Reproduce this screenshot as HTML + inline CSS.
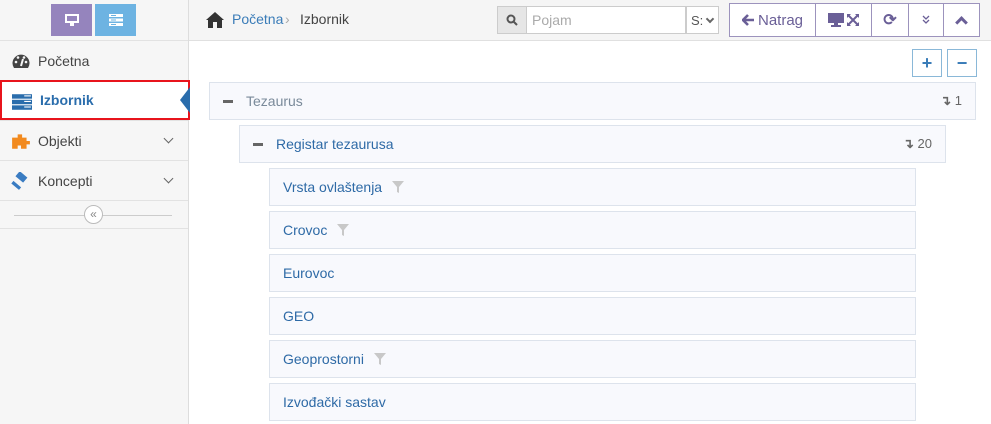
<!DOCTYPE html>
<html><head><meta charset="utf-8"><style>
*{box-sizing:border-box;margin:0;padding:0}
body{width:991px;height:424px;overflow:hidden;background:#fff;font-family:"Liberation Sans",sans-serif;font-size:13px;position:relative}
.abs{position:absolute}
#side{left:0;top:0;width:189px;height:424px;background:#f6f6f6;border-right:1px solid #ddd}
.topb{top:4px;width:41px;height:32px;display:flex;align-items:center;justify-content:center}
.item{left:0;width:188px;height:40px;border-top:1px solid #e2e2e2;display:flex;align-items:center;padding-left:38px;color:#444;font-size:14px}
.ico{position:absolute;left:11px;top:11px;width:20px;height:18px}
.chev{position:absolute;right:16px;top:14px;width:7px;height:7px;border-right:1.5px solid #666;border-bottom:1.5px solid #666;transform:rotate(45deg)}
#hdr{left:189px;top:0;width:802px;height:41px;background:#f5f5f5;border-bottom:1px solid #e0e0e0}
.btn{top:3px;height:34px;border:1px solid #9c93bd;background:#fff;display:flex;align-items:center;justify-content:center;color:#6a5f97}
.row{height:38px;background:#f8f9fd;border:1px solid #dde3ec;display:flex;align-items:center;color:#2e6aa6;font-size:14px}
.minus{display:inline-block;width:10px;height:3px;background:#666;margin:0 13px 0 13px}
.filt{display:inline-block;margin-left:10px;width:12px;height:12px}
.cnt{margin-left:auto;margin-right:13px;color:#666;font-size:13px}
.sb{top:49px;width:30px;height:28px;border:1px solid #8ab8d8;background:#fff;color:#3a7cb8;font-size:18px;font-weight:bold;display:flex;align-items:center;justify-content:center}
</style></head><body>
<div id="side" class="abs">
 <div class="abs topb" style="left:51px;background:#9584bd"><svg width="14" height="12" viewBox="0 0 14 12"><rect x="0" y="0" width="14" height="9" fill="#fff"/><rect x="2" y="2" width="10" height="5" fill="#9584bd"/><rect x="5" y="9" width="4" height="3" fill="#fff"/></svg></div>
 <div class="abs topb" style="left:95px;background:#6db3e2"><svg width="14" height="12" viewBox="0 0 14 12"><rect y="0" width="14" height="3" fill="#fff"/><rect y="4.5" width="14" height="3" fill="#fff"/><rect y="9" width="14" height="3" fill="#fff"/><rect x="2" y="1" width="5" height="1" fill="#6db3e2"/><rect x="2" y="5.5" width="5" height="1" fill="#6db3e2"/><rect x="2" y="10" width="5" height="1" fill="#6db3e2"/></svg></div>
 <div class="abs item" style="top:40px"><svg class="ico" viewBox="0 0 20 18"><path d="M3 16A8.5 8.5 0 1 1 17 16Z" fill="#444"/><path d="M10 14L12 7" stroke="#f6f6f6" stroke-width="2"/><circle cx="5" cy="10" r="1.3" fill="#f6f6f6"/><circle cx="15" cy="10" r="1.3" fill="#f6f6f6"/><circle cx="7" cy="5.5" r="1.3" fill="#f6f6f6"/><circle cx="13" cy="5.5" r="1.3" fill="#f6f6f6"/></svg>Početna</div>
 <div class="abs item" style="top:80px;background:#fff;border:2px solid #e8141c;width:190px;color:#2a6dac;font-weight:bold;font-size:14px"><svg class="ico" viewBox="0 0 18 16" style="left:10px"><rect y="1" width="18" height="4" fill="#2a6dac"/><rect y="6" width="18" height="4" fill="#2a6dac"/><rect y="11" width="18" height="4" fill="#2a6dac"/><rect x="11" y="2" width="6" height="1" fill="#fff"/><rect x="11" y="7" width="6" height="1" fill="#fff"/><rect x="11" y="12" width="6" height="1" fill="#fff"/></svg>Izbornik
  <div style="position:absolute;right:-2px;top:5px;width:0;height:0;border-top:13px solid transparent;border-bottom:13px solid transparent;border-right:10px solid #2a6dac"></div></div>
 <div class="abs item" style="top:120px"><svg class="ico" viewBox="0 0 18 16"><path d="M1 5H6V2H10V5H14V8H17V11H14V15H9V12H6V15H1Z" fill="#f28a1e"/></svg>Objekti<div class="chev"></div></div>
 <div class="abs item" style="top:160px"><svg class="ico" viewBox="0 0 18 16"><rect x="5" y="1" width="9" height="6" transform="rotate(40 9 4)" fill="#3a7cc2"/><rect x="3" y="8" width="3" height="9" transform="rotate(-50 4 12)" fill="#3a7cc2"/></svg>Koncepti<div class="chev"></div></div>
 <div class="abs" style="left:0;top:200px;width:188px;height:29px;border-top:1px solid #e2e2e2;border-bottom:1px solid #e2e2e2">
  <div class="abs" style="left:14px;top:14px;width:158px;height:1px;background:#ccc"></div>
  <div class="abs" style="left:84px;top:4px;width:19px;height:19px;border:1px solid #bbb;border-radius:50%;background:#fff;font-size:12px;color:#888;text-align:center;line-height:16px">«</div>
 </div>
</div>
<div id="hdr" class="abs">
 <svg class="abs" style="left:16px;top:11px" width="20" height="17" viewBox="0 0 20 17"><path d="M10 1L1 9H3V17H8V11H12V17H17V9H19Z" fill="#333"/></svg>
 <span class="abs" style="left:43px;top:11px;color:#3a7cb8;font-size:14px">Početna</span>
 <span class="abs" style="left:96px;top:11px;color:#aaa;font-size:14px">›</span>
 <span class="abs" style="left:111px;top:11px;color:#444;font-size:14px">Izbornik</span>
 <div class="abs" style="left:308px;top:6px;width:30px;height:28px;background:#e6e6e6;border:1px solid #ccc;display:flex;align-items:center;justify-content:center"><svg width="12" height="12" viewBox="0 0 12 12"><circle cx="5" cy="5" r="3.5" stroke="#555" stroke-width="2" fill="none"/><path d="M7.5 7.5L11 11" stroke="#555" stroke-width="2"/></svg></div>
 <div class="abs" style="left:337px;top:6px;width:160px;height:28px;background:#fff;border:1px solid #ccc;color:#aaa;font-size:14px;padding:5px 5px">Pojam</div>
 <div class="abs" style="left:497px;top:6px;width:33px;height:28px;background:#fff;border:1px solid #ccc;color:#555;font-size:13px;padding:6px 4px">S:<span style="display:inline-block;width:6px;height:6px;border-right:2px solid #666;border-bottom:2px solid #666;transform:rotate(45deg);margin-left:4px;position:relative;top:-3px"></span></div>
 <div class="abs btn" style="left:540px;width:87px;font-size:15px"><svg width="12" height="12" viewBox="0 0 12 12" style="margin-right:4px"><path d="M6 1L1 6L6 11M1 6H12" stroke="#6a5f97" stroke-width="2.6" fill="none"/></svg>Natrag</div>
 <div class="abs btn" style="left:626px;width:57px"><svg width="32" height="14" viewBox="0 0 32 14"><rect x="0" y="0" width="16" height="10" fill="#6a5f97"/><rect x="6" y="10" width="4" height="2" fill="#6a5f97"/><rect x="3" y="12" width="10" height="2" fill="#6a5f97"/><path d="M19 1H23L19 5ZM31 1V5L27 1ZM19 13V9L23 13ZM31 13H27L31 9Z" fill="#6a5f97"/><path d="M20 2L30 12M30 2L20 12" stroke="#6a5f97" stroke-width="2"/></svg></div>
 <div class="abs btn" style="left:682px;width:38px;font-size:16px;font-weight:bold">⟳</div>
 <div class="abs btn" style="left:719px;width:36px"><svg width="10" height="10" viewBox="0 0 10 10"><path d="M2 1L5 4L8 1M2 5L5 8L8 5" stroke="#6a5f97" stroke-width="1.3" fill="none"/></svg></div>
 <div class="abs btn" style="left:754px;width:37px"><div style="width:9px;height:9px;border-left:3px solid #6a5f97;border-top:3px solid #6a5f97;transform:rotate(45deg);margin-top:5px"></div></div>
</div>
<div class="abs sb" style="left:912px">+</div>
<div class="abs sb" style="left:947px">−</div>
<div class="abs row" style="left:209px;top:82px;width:767px;color:#7a8a9a"><span class="minus"></span>Tezaurus<span class="cnt"><b>↴</b> 1</span></div>
<div class="abs row" style="left:239px;top:125px;width:707px"><span class="minus"></span>Registar tezaurusa<span class="cnt"><b>↴</b> 20</span></div>
<div class="abs row" style="left:269px;top:168px;width:647px;padding-left:13px">Vrsta ovlaštenja<svg class="filt" viewBox="0 0 12 12"><path d="M0 0H12L7 6V12L5 11V6Z" fill="#c8c8c8"/></svg></div>
<div class="abs row" style="left:269px;top:211px;width:647px;padding-left:13px">Crovoc<svg class="filt" viewBox="0 0 12 12"><path d="M0 0H12L7 6V12L5 11V6Z" fill="#c8c8c8"/></svg></div>
<div class="abs row" style="left:269px;top:254px;width:647px;padding-left:13px">Eurovoc</div>
<div class="abs row" style="left:269px;top:297px;width:647px;padding-left:13px">GEO</div>
<div class="abs row" style="left:269px;top:340px;width:647px;padding-left:13px">Geoprostorni<svg class="filt" viewBox="0 0 12 12"><path d="M0 0H12L7 6V12L5 11V6Z" fill="#c8c8c8"/></svg></div>
<div class="abs row" style="left:269px;top:383px;width:647px;padding-left:13px">Izvođački sastav</div>
</body></html>
